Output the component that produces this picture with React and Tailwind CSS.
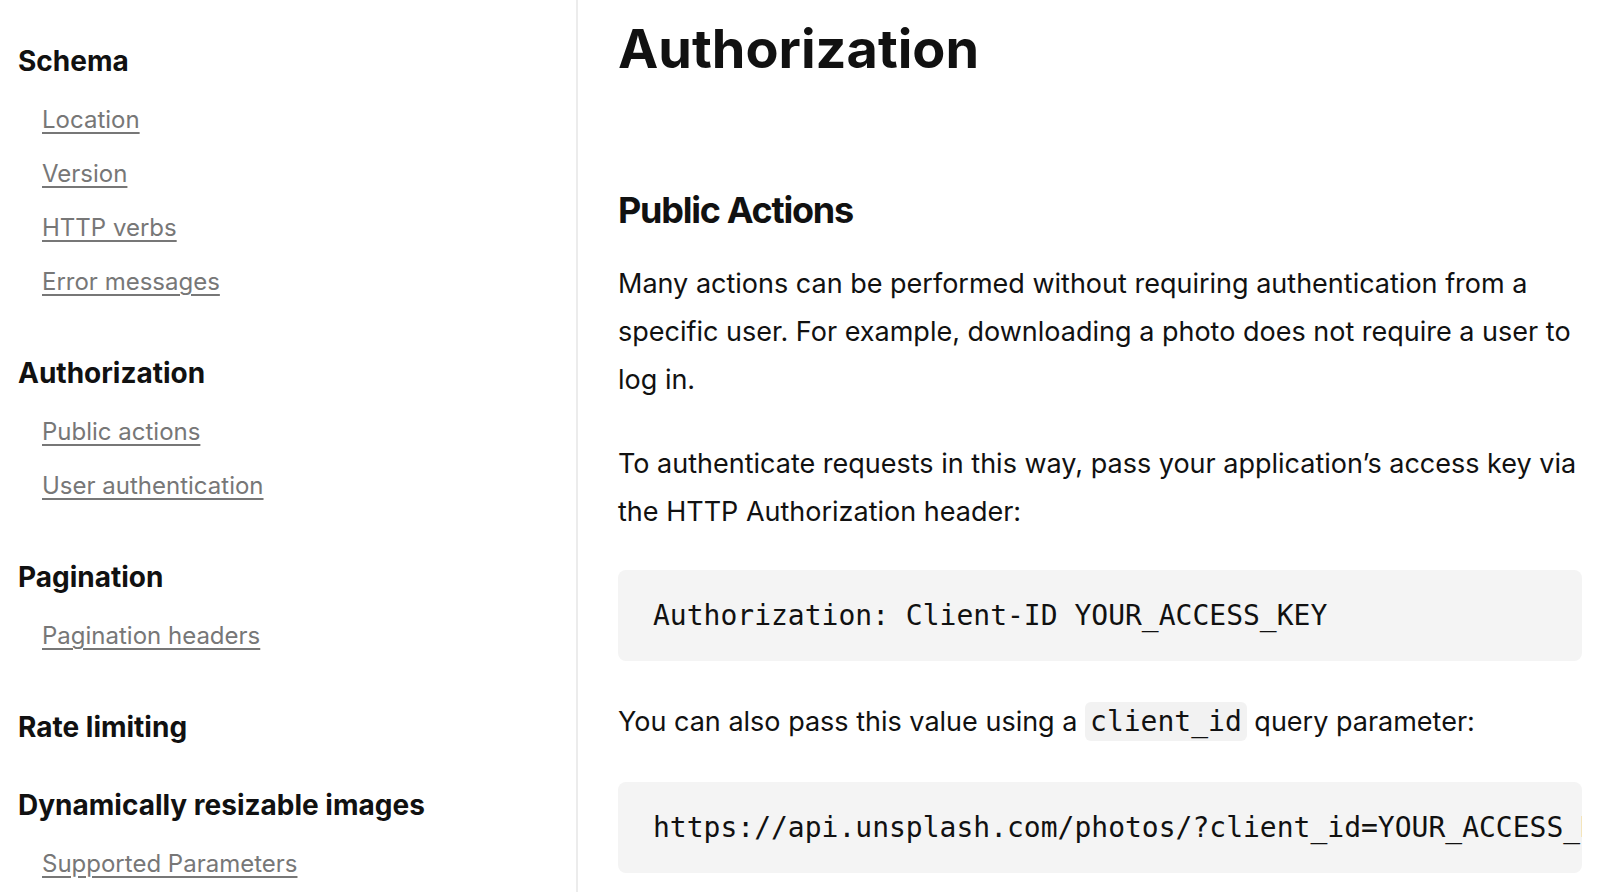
const NAV = [
  { title: 'Schema', links: ['Location', 'Version', 'HTTP verbs', 'Error messages'] },
  { title: 'Authorization', links: ['Public actions', 'User authentication'] },
  { title: 'Pagination', links: ['Pagination headers'] },
  { title: 'Rate limiting', links: [] },
  { title: 'Dynamically resizable images', links: ['Supported Parameters'] },
];

function Sidebar() {
  return (
    <aside className="w-[578px] shrink-0 border-r-2 border-[#ececec] pl-[18px] pt-[43px]">
      {NAV.map((s) => (
        <section key={s.title} className="mb-[42px]">
          <h3 className="text-[28px] leading-[36px] font-bold text-[#111]">{s.title}</h3>
          {s.links.length > 0 && (
            <ul className="mt-[14px] pb-[4px] pl-[24px]">
              {s.links.map((l) => (
                <li key={l} className="text-[24px] leading-[54px]">
                  <a href="#" className="text-[#777] underline underline-offset-[4px] decoration-[1.5px]">{l}</a>
                </li>
              ))}
            </ul>
          )}
        </section>
      ))}
    </aside>
  );
}

function CodeBlock({ children }) {
  return (
    <pre className="rounded-[8px] bg-[#f4f4f4] pl-[35px] py-[29px] overflow-hidden whitespace-pre font-['DejaVu_Sans_Mono',monospace] text-[28px] leading-[33px] text-[#111]">
      {children}
    </pre>
  );
}

export default function App() {
  return (
    <div className="flex h-screen overflow-hidden bg-white text-[#111] font-['Inter','Noto_Sans',sans-serif]">
      <Sidebar />
      <main className="flex-1 min-w-0 pl-[40px] pr-[40px] pt-[16px]">
        <h1 className="text-[54px] leading-[65px] font-bold">Authorization</h1>

        <h2 className="mt-[107px] text-[36px] leading-[44px] font-bold tracking-[-0.035em]">Public Actions</h2>

        <p className="mt-[28px] text-[27px] leading-[48px]">
          Many actions can be performed without requiring authentication from a specific user. For example, downloading a photo does not require a user to log in.
        </p>

        <p className="mt-[36px] text-[27px] leading-[48px]">
          To authenticate requests in this way, pass your application’s access key via the HTTP Authorization header:
        </p>

        <div className="mt-[34px]">
          <CodeBlock>Authorization: Client-ID YOUR_ACCESS_KEY</CodeBlock>
        </div>

        <p className="mt-[37px] text-[27px] leading-[48px]">
          You can also pass this value using a{' '}
          <code className="rounded-[6px] bg-[#f2f2f2] px-[5px] py-[3px] font-['DejaVu_Sans_Mono',monospace] text-[28px] leading-none">client_id</code>{' '}
          query parameter:
        </p>

        <div className="mt-[36px]">
          <CodeBlock>https://api.unsplash.com/photos/?client_id=YOUR_ACCESS_KEY</CodeBlock>
        </div>
      </main>
    </div>
  );
}
